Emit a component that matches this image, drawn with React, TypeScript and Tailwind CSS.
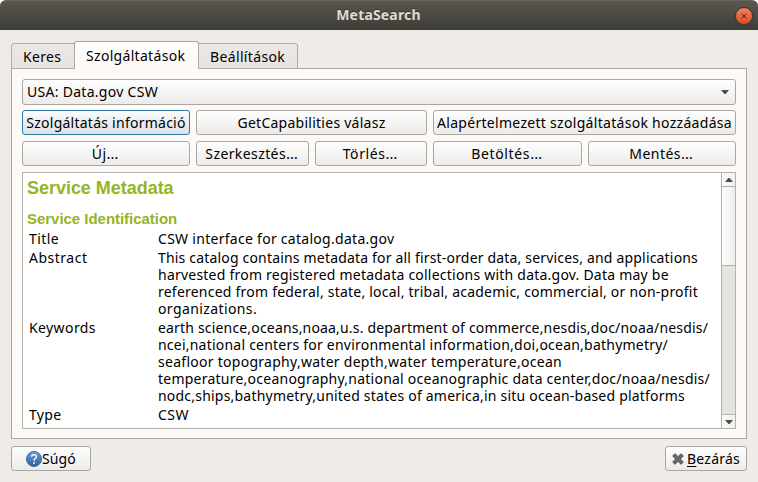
import type { ReactNode } from 'react';

function Button({ className = '', active = false, children }: { className?: string; active?: boolean; children: ReactNode }) {
  const tone = active
    ? 'border-[#2f78a5] from-[#fbfcfd] to-[#d9e2e7]'
    : 'border-[#aaa7a3] from-[#fefefe] to-[#ecebe9]';
  return (
    <button
      className={`flex h-[25px] shrink-0 items-center justify-center rounded-[3px] border bg-linear-to-b leading-none whitespace-nowrap ${tone} ${className}`}
    >
      {children}
    </button>
  );
}

function Ellipsis() {
  return <span className="text-[15px] leading-none tracking-[1.8px]">…</span>;
}

const rows: { label: string; labelClass: string; lines: [string, string][] }[] = [
  { label: 'Title', labelClass: 'tracking-[0.42px]', lines: [['CSW interface for catalog.data.gov', 'tracking-[0.28px]']] },
  {
    label: 'Abstract',
    labelClass: 'tracking-[0.5px]',
    lines: [
      ['This catalog contains metadata for all first-order data, services, and applications', 'tracking-[0.181px]'],
      ['harvested from registered metadata collections with data.gov. Data may be', 'tracking-[0.224px]'],
      ['referenced from federal, state, local, tribal, academic, commercial, or non-profit', 'tracking-[0.224px]'],
      ['organizations.', 'tracking-[0.4px]'],
    ],
  },
  {
    label: 'Keywords',
    labelClass: 'tracking-[0.4px]',
    lines: [
      ['earth science,oceans,noaa,u.s. department of commerce,nesdis,doc/noaa/nesdis/', 'tracking-[0.175px]'],
      ['ncei,national centers for environmental information,doi,ocean,bathymetry/', 'tracking-[0.221px]'],
      ['seafloor topography,water depth,water temperature,ocean', 'tracking-[0.276px]'],
      ['temperature,oceanography,national oceanographic data center,doc/noaa/nesdis/', 'tracking-[0.237px]'],
      ['nodc,ships,bathymetry,united states of america,in situ ocean-based platforms', 'tracking-[0.208px]'],
    ],
  },
  { label: 'Type', labelClass: 'tracking-[0.3px]', lines: [['CSW', 'tracking-[0.5px]']] },
];

function TitleBar() {
  return (
    <header className="grid h-[30px] shrink-0 grid-cols-[1fr_auto_1fr] items-center rounded-t-[6px] border-t border-[#66645b] bg-linear-to-b from-[#59574f] to-[#3d3c37] pr-[5px] pl-1">
      <span />
      <h1 className="pb-px text-[14px] leading-none font-bold tracking-[0.17px] text-[#dfdbd2] [text-shadow:0_-1px_0_#33322e]">MetaSearch</h1>
      <button className="flex size-[18px] items-center justify-center justify-self-end rounded-full border border-[#393731] bg-linear-to-b from-[#f5825b] to-[#df4a18]">
        <svg viewBox="0 0 6 6" className="size-[6px]" fill="none" stroke="#4a281b" strokeWidth="1">
          <path d="M.5 .5 5.5 5.5M5.5 .5 .5 5.5" />
        </svg>
      </button>
    </header>
  );
}

function Tabs() {
  return (
    <nav className="relative z-10 -mb-px flex h-7 items-end leading-none whitespace-nowrap">
      <div className="flex h-[26px] w-16 items-center rounded-tl-[3px] border border-[#b0adaa] bg-linear-to-b from-[#eae7e5] to-[#e6e3e1] pt-[2px] pl-[11px] tracking-[0.3px]">Keres</div>
      <div className="-ml-px flex h-7 w-[125px] items-center rounded-t-[3px] border border-b-0 border-[#aaa7a3] bg-linear-to-b from-white to-[#fdf9f6] pl-[11px] tracking-[0.31px]">Szolgáltatások</div>
      <div className="-ml-px flex h-[26px] w-[100px] items-center rounded-tr-[3px] border border-[#b0adaa] bg-linear-to-b from-[#eae7e5] to-[#e6e3e1] pt-[2px] pl-[11px] tracking-[0.36px]">Beállítások</div>
    </nav>
  );
}

function ScrollBar() {
  return (
    <div className="flex w-[14px] shrink-0 flex-col border-l border-[#b3b1ae] bg-[#e3e3df]">
      <div className="flex h-[14px] shrink-0 items-center justify-center border-b border-[#b3b1ae] bg-linear-to-r from-[#fdfdfc] to-[#efeeec]">
        <svg viewBox="0 0 8 4" className="h-1 w-2 fill-[#4d4c49]"><path d="M0 4 3.4 0h1.2L8 4z" /></svg>
      </div>
      <div className="h-[79px] shrink-0 border-b border-[#b3b1ae] bg-linear-to-r from-[#fdfdfc] to-[#edecea]" />
      <div className="flex-1" />
      <div className="flex h-[14px] shrink-0 items-center justify-center border-t border-[#b3b1ae] bg-linear-to-r from-[#fdfdfc] to-[#efeeec]">
        <svg viewBox="0 0 8 4" className="h-1 w-2 fill-[#4d4c49]"><path d="M0 0h8L4.6 4H3.4z" /></svg>
      </div>
    </div>
  );
}

function Metadata() {
  return (
    <section className="mt-1.5 flex h-[257px] border border-[#b3b1ae] bg-white">
      <div className="min-w-0 flex-1 overflow-hidden pl-1">
        <h2 className="mt-1 h-[22px] font-['Liberation_Sans',Arial,sans-serif] text-[18px] leading-[22px] font-bold tracking-[-0.03px] text-[#97b326]">Service Metadata</h2>
        <h3 className="mt-[11px] h-[18px] font-['Liberation_Sans',Arial,sans-serif] text-[15px] leading-[18px] font-bold tracking-[-0.03px] text-[#97b326]">Service Identification</h3>
        <dl className="mt-[2px] flex flex-col gap-[2px] pl-[2px] leading-[17px] whitespace-nowrap">
          {rows.map((row) => (
            <div key={row.label} className="flex">
              <dt className={`w-[129px] shrink-0 ${row.labelClass}`}>{row.label}</dt>
              <dd>
                {row.lines.map(([text, tracking]) => (
                  <div key={text} className={tracking}>{text}</div>
                ))}
              </dd>
            </div>
          ))}
        </dl>
      </div>
      <ScrollBar />
    </section>
  );
}

function HelpIcon() {
  return (
    <svg viewBox="0 0 16 16" className="size-4">
      <defs>
        <linearGradient id="help" x1="0" y1="0" x2="0" y2="1">
          <stop offset="0" stopColor="#6f9fce" />
          <stop offset="1" stopColor="#28639f" />
        </linearGradient>
      </defs>
      <circle cx="8" cy="8" r="7.5" fill="url(#help)" stroke="#3a6c9f" />
      <path d="M5.6 5.8C5.6 2.8 10.5 2.9 10.4 5.8 10.3 7.6 8 7.6 8 9.8" fill="none" stroke="#fff" strokeWidth="1.4" />
      <circle cx="8" cy="12" r=".9" fill="#fff" />
    </svg>
  );
}

function CloseIcon() {
  return (
    <svg viewBox="0 0 12 12" className="size-3">
      <path d="M3 .7 6 3.7 9 .7 11.3 3 8.3 6 11.3 9 9 11.3 6 8.3 3 11.3.7 9 3.7 6 .7 3z" fill="#6b6b69" stroke="#454543" strokeWidth=".9" strokeLinejoin="round" />
    </svg>
  );
}

export default function App() {
  return (
    <div className="h-[482px] w-[758px] overflow-hidden bg-white font-['Noto_Sans','DejaVu_Sans',sans-serif] text-[14px] text-black">
      <div className="flex h-full flex-col rounded-t-[6px] bg-[#efebe7]">
        <TitleBar />
        <div className="px-[11px] pt-[11px]">
          <Tabs />
          <main className="h-[371px] border border-[#aaa7a3] bg-[#fdf9f6] px-[10px] pt-[10px]">
            <div className="flex h-[26px] items-center justify-between rounded-[3px] border border-[#aaa7a3] bg-linear-to-b from-[#fefefe] to-[#ecebe9] pr-1.5 pl-1">
              <span className="pb-px leading-none tracking-[0.288px]">USA: Data.gov CSW</span>
              <svg viewBox="0 0 8 4" className="h-1 w-2 fill-[#4d4c49]"><path d="M0 0h8L4.6 4H3.4z" /></svg>
            </div>
            <div className="mt-[5px] flex gap-1.5">
              <Button active className="w-[168px] tracking-[0.25px]">Szolgáltatás információ</Button>
              <Button className="w-[231px] tracking-[0.255px]">GetCapabilities válasz</Button>
              <Button className="flex-1 tracking-[0.298px]">Alapértelmezett szolgáltatások hozzáadása</Button>
            </div>
            <div className="mt-1.5 flex gap-1.5">
              <Button className="w-[168px] tracking-[0.5px]">Új<Ellipsis /></Button>
              <Button className="w-[113px] tracking-[0.4px]">Szerkesztés<Ellipsis /></Button>
              <Button className="w-[112px] tracking-[0.6px]">Törlés<Ellipsis /></Button>
              <Button className="w-[149px] tracking-[0.65px]">Betöltés<Ellipsis /></Button>
              <Button className="flex-1 tracking-[0.45px]">Mentés<Ellipsis /></Button>
            </div>
            <Metadata />
          </main>
          <footer className="mt-[7px] flex justify-between">
            <Button className="w-20">
              <HelpIcon />
              <span className="pt-px tracking-[0.1px]">Súgó</span>
            </Button>
            <Button className="w-[82px] gap-[3px]">
              <CloseIcon />
              <span className="pt-px tracking-[0.23px]"><u className="underline-offset-2">B</u>ezárás</span>
            </Button>
          </footer>
        </div>
      </div>
    </div>
  );
}
